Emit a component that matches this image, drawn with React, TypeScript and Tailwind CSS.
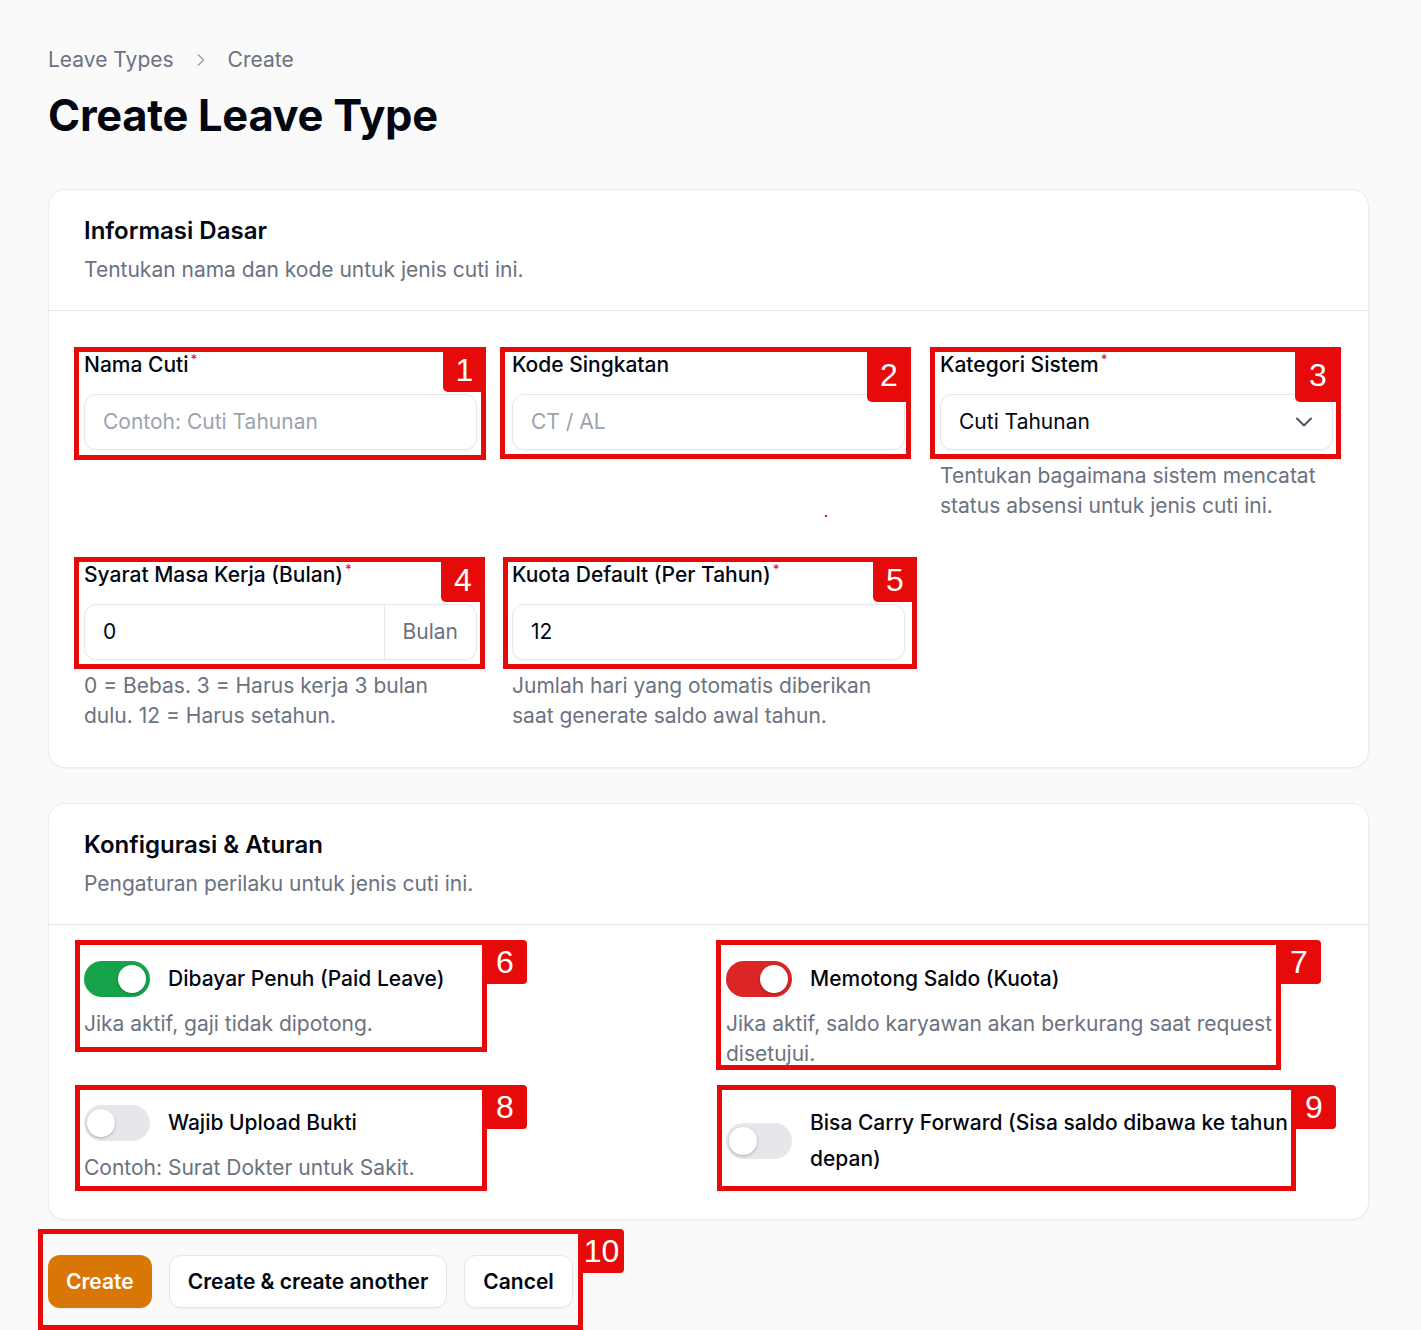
import { ChevronDown, ChevronRight } from "lucide-react";

type Mark = {
  n: number;
  left: number;
  top: number;
  w: number;
  h: number;
  badge: { left: number; top: number; w: number; h: number; outside: boolean };
};

const marks: Mark[] = [
  { n: 1, left: 74, top: 347, w: 412, h: 113, badge: { left: 443, top: 347, w: 43, h: 45, outside: false } },
  { n: 2, left: 500, top: 347, w: 411, h: 112, badge: { left: 867, top: 347, w: 44, h: 55, outside: false } },
  { n: 3, left: 930, top: 347, w: 411, h: 112, badge: { left: 1295, top: 347, w: 46, h: 55, outside: false } },
  { n: 4, left: 74, top: 557, w: 411, h: 112, badge: { left: 441, top: 557, w: 44, h: 45, outside: false } },
  { n: 5, left: 503, top: 557, w: 414, h: 112, badge: { left: 873, top: 557, w: 44, h: 45, outside: false } },
  { n: 6, left: 75, top: 940, w: 412, h: 112, badge: { left: 483, top: 940, w: 44, h: 44, outside: true } },
  { n: 7, left: 716, top: 940, w: 565, h: 130, badge: { left: 1277, top: 940, w: 44, h: 44, outside: true } },
  { n: 8, left: 75, top: 1085, w: 412, h: 106, badge: { left: 483, top: 1085, w: 44, h: 44, outside: true } },
  { n: 9, left: 717, top: 1085, w: 579, h: 106, badge: { left: 1292, top: 1085, w: 44, h: 44, outside: true } },
  { n: 10, left: 38, top: 1229, w: 545, h: 101, badge: { left: 579, top: 1229, w: 45, h: 44, outside: true } },
];

function Req() {
  return <span className="ml-[2px] align-super text-[13px] leading-none text-[#dc2626]">*</span>;
}

function Label({ text, required }: { text: string; required?: boolean }) {
  return (
    <label className="block pt-[1px] text-[21px] font-medium leading-[30px] text-[#030712]">
      {text}
      {required && <Req />}
    </label>
  );
}

function Hint({ children }: { children: React.ReactNode }) {
  return <p className="mt-[11px] text-[21px] leading-[30px] text-[#6b7280]">{children}</p>;
}

const inputBox =
  "mt-[14px] flex h-[56px] items-center rounded-[12px] border border-[#e5e7eb] bg-white shadow-[0_1px_2px_rgba(0,0,0,0.05)]";

function Toggle({ on, color }: { on: boolean; color?: string }) {
  return (
    <span
      className={`relative inline-flex h-[36px] w-[66px] shrink-0 items-center rounded-full ${
        on ? color : "bg-[#e5e7eb]"
      }`}
    >
      <span
        className={`absolute top-[4px] h-[28px] w-[28px] rounded-full bg-white shadow-[0_1px_3px_rgba(0,0,0,0.25)] ${
          on ? "left-[34px]" : "left-[3px]"
        }`}
      />
    </span>
  );
}

function ToggleField({
  label,
  hint,
  on,
  color,
}: {
  label: string;
  hint?: string;
  on: boolean;
  color?: string;
}) {
  return (
    <div>
      <div className="flex items-center gap-[18px]">
        <Toggle on={on} color={color} />
        <span className="text-[21px] font-medium leading-[36px] text-[#030712]">{label}</span>
      </div>
      {hint && <p className="mt-[12px] text-[21px] leading-[30px] text-[#6b7280]">{hint}</p>}
    </div>
  );
}

function SectionHeader({ title, desc }: { title: string; desc: string }) {
  return (
    <div className="border-b border-[#e5e7eb] px-[35px] pt-[24px] pb-[25px]">
      <h2 className="text-[24px] font-semibold leading-[34px] text-[#030712]">{title}</h2>
      <p className="mt-[7px] text-[21px] leading-[30px] text-[#6b7280]">{desc}</p>
    </div>
  );
}

const btn =
  "h-[53px] rounded-[12px] px-[18px] text-[21px] font-semibold shadow-[0_1px_2px_rgba(0,0,0,0.05)]";

export default function App() {
  return (
    <div className="relative min-h-[1330px] w-full overflow-hidden bg-[#fafafa] font-['Inter',sans-serif]">
      <div className="pl-12 pr-[52px] pt-[45px]">
        <nav className="flex items-center gap-[17px] text-[21px] leading-[30px] text-[#6b7280]">
          <span>Leave Types</span>
          <ChevronRight size={20} className="text-[#9ca3af]" strokeWidth={2} />
          <span>Create</span>
        </nav>
        <h1 className="mt-[14px] text-[43.5px] font-bold leading-[52px] tracking-[-0.3px] text-[#030712]">
          Create Leave Type
        </h1>

        <section className="mt-[48px] rounded-[17px] border border-[#ececee] bg-white shadow-[0_1px_2px_rgba(0,0,0,0.04)]">
          <SectionHeader title="Informasi Dasar" desc="Tentukan nama dan kode untuk jenis cuti ini." />
          <div className="grid grid-cols-3 gap-x-[35px] gap-y-[38px] px-[35px] pt-[38px] pb-[36px]">
            <div>
              <Label text="Nama Cuti" required />
              <div className={inputBox}>
                <span className="px-[18px] text-[21px] text-[#9ca3af]">Contoh: Cuti Tahunan</span>
              </div>
            </div>
            <div>
              <Label text="Kode Singkatan" />
              <div className={inputBox}>
                <span className="px-[18px] text-[21px] text-[#9ca3af]">CT / AL</span>
              </div>
            </div>
            <div>
              <Label text="Kategori Sistem" required />
              <div className={`${inputBox} justify-between pl-[18px] pr-[14px]`}>
                <span className="text-[21px] text-[#030712]">Cuti Tahunan</span>
                <ChevronDown size={28} className="text-[#4b5563]" strokeWidth={1.8} />
              </div>
              <Hint>Tentukan bagaimana sistem mencatat status absensi untuk jenis cuti ini.</Hint>
            </div>
            <div>
              <Label text="Syarat Masa Kerja (Bulan)" required />
              <div className={inputBox}>
                <span className="flex-1 px-[18px] text-[21px] text-[#030712]">0</span>
                <span className="flex h-full items-center border-l border-[#e5e7eb] px-[18px] text-[21px] text-[#6b7280]">
                  Bulan
                </span>
              </div>
              <Hint>0 = Bebas. 3 = Harus kerja 3 bulan dulu. 12 = Harus setahun.</Hint>
            </div>
            <div>
              <Label text="Kuota Default (Per Tahun)" required />
              <div className={inputBox}>
                <span className="px-[18px] text-[21px] text-[#030712]">12</span>
              </div>
              <Hint>Jumlah hari yang otomatis diberikan saat generate saldo awal tahun.</Hint>
            </div>
          </div>
        </section>

        <section className="mt-[35px] rounded-[17px] border border-[#ececee] bg-white shadow-[0_1px_2px_rgba(0,0,0,0.04)]">
          <SectionHeader title="Konfigurasi & Aturan" desc="Pengaturan perilaku untuk jenis cuti ini." />
          <div className="grid grid-cols-2 gap-x-[35px] gap-y-[36px] px-[35px] pt-[36px] pb-[36px]">
            <ToggleField
              label="Dibayar Penuh (Paid Leave)"
              hint="Jika aktif, gaji tidak dipotong."
              on
              color="bg-[#16a34a]"
            />
            <ToggleField
              label="Memotong Saldo (Kuota)"
              hint="Jika aktif, saldo karyawan akan berkurang saat request disetujui."
              on
              color="bg-[#dc2626]"
            />
            <ToggleField label="Wajib Upload Bukti" hint="Contoh: Surat Dokter untuk Sakit." on={false} />
            <ToggleField label="Bisa Carry Forward (Sisa saldo dibawa ke tahun depan)" on={false} />
          </div>
        </section>

        <div className="mt-[35px] flex gap-[17px]">
          <button className={`${btn} bg-[#d97706] text-white`}>Create</button>
          <button className={`${btn} border border-[#e5e7eb] bg-white text-[#030712]`}>
            Create &amp; create another
          </button>
          <button className={`${btn} border border-[#e5e7eb] bg-white text-[#030712]`}>Cancel</button>
        </div>
      </div>

      {/* annotation overlay */}
      <div className="pointer-events-none absolute inset-0">
        {marks.map((m) => (
          <div key={m.n}>
            <div
              className="absolute border-[5px] border-[#e60a0a]"
              style={{ left: m.left, top: m.top, width: m.w, height: m.h }}
            />
            <div
              className={`absolute flex items-center justify-center bg-[#e60a0a] font-['Liberation_Sans',sans-serif] text-[32px] leading-none text-white ${
                m.badge.outside ? "rounded-r-[4px]" : "rounded-bl-[5px]"
              }`}
              style={{ left: m.badge.left, top: m.badge.top, width: m.badge.w, height: m.badge.h }}
            >
              {m.n}
            </div>
          </div>
        ))}
        <div className="absolute left-[825px] top-[515px] h-[2px] w-[2px] bg-[#e60a0a]" />
      </div>
    </div>
  );
}
